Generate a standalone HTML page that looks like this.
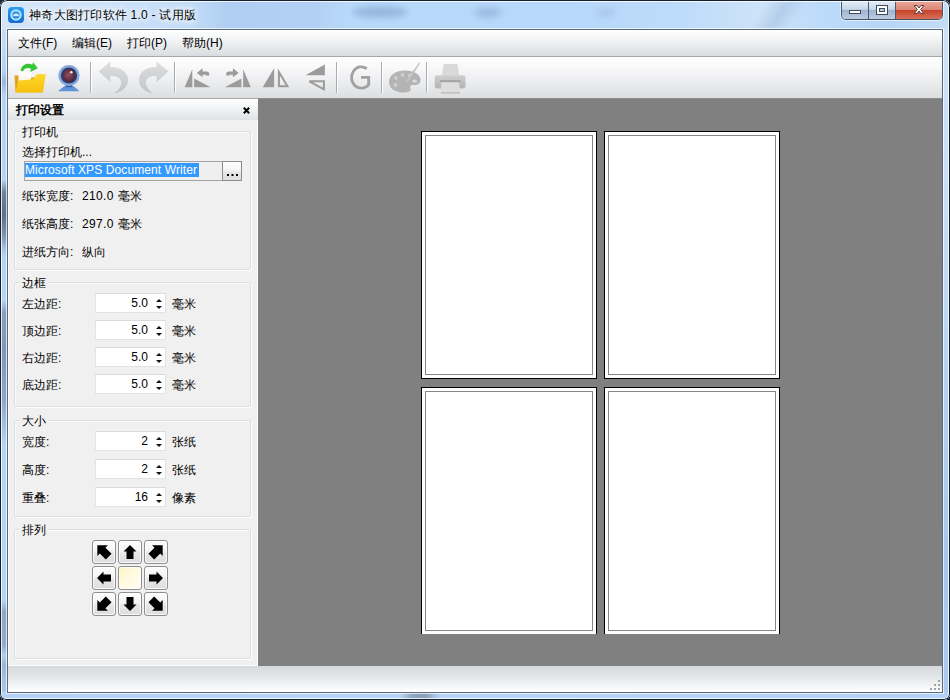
<!DOCTYPE html>
<html lang="zh">
<head>
<meta charset="utf-8">
<title>神奇大图打印软件 1.0 - 试用版</title>
<style>
*{box-sizing:border-box;margin:0;padding:0}
html,body{width:950px;height:700px;overflow:hidden;background:#1c2530}
body{font-family:"Liberation Sans",sans-serif;font-size:12px;line-height:14px;color:#000;position:relative}
.t{position:absolute;white-space:nowrap;height:14px;line-height:14px;overflow:visible}
/* window frame */
#win{position:absolute;left:0;top:0;width:950px;height:700px;border-radius:7px 7px 6px 6px;background:#b8d7f8;overflow:hidden}
#fr-title{position:absolute;left:0;top:0;width:950px;height:30px;background:linear-gradient(90deg,#d3e5f8 0,#cfe3f9 80px,#c2dcf7 190px,#afcef1 228px,#b1d0f3 313px,#b9d9fa 350px,#b7d8fb 570px,#bddbfa 680px,#cde3f8 760px,#bcdaf9 825px,#b6d6f8 885px,#c3dcf6 950px)}
#fr-left{position:absolute;left:0;top:29px;width:8px;height:671px;background:linear-gradient(180deg,#c8ddf6 0px,#b5d3f5 41px,#9fb6d4 53px,#b5d3f5 66px,#b5d3f5 151px,#6f829c 163px,#5f7189 186px,#7f93af 206px,#a9c6ea 221px,#b5d5f8 229px,#b5d5f8 271px,#8aa0c0 283px,#7f96b8 321px,#8ea7c9 371px,#a9c6e8 403px,#b5d5f8 416px,#b5d5f8 571px,#8fa6c6 583px,#93abcc 616px,#b0cef0 626px,#9db5d5 636px,#a8c6ea 661px,#b2d3f7 671px)}
#fr-right{position:absolute;left:942px;top:29px;width:8px;height:671px;background:linear-gradient(180deg,#cfe1f6 0,#c8ddf5 25%,#b4d0f0 55%,#a6c6ec 80%,#abcbf0 100%)}
#fr-bottom{position:absolute;left:0;top:692px;width:950px;height:8px;background:linear-gradient(90deg,#b2d3f7 0,#b4d5f8 400px,#93a6c0 412px,#8c9db5 425px,#b4d5f8 440px,#b2d3f7 100%)}
.blob{position:absolute;border-radius:50%;filter:blur(3px)}
#fr-edge{position:absolute;left:0;top:0;width:950px;height:700px;border-radius:7px 7px 6px 6px;box-shadow:inset 0 0 0 1px #17212e, inset 0 0 0 2px rgba(255,255,255,.8);pointer-events:none}
#fr-inner{position:absolute;left:6px;top:28px;width:938px;height:666px;border:1px solid rgba(255,255,255,.7)}
#client{position:absolute;left:7px;top:29px;width:936px;height:664px;border:1px solid #5a6a7c;background:#f0f0f0}

/* title */
#ticon{position:absolute;left:8px;top:7px;width:16px;height:16px}
#ttext{position:absolute;left:29px;top:7px;height:16px;line-height:16px;font-size:12px;letter-spacing:.25px;white-space:nowrap;color:#000;
 text-shadow:0 0 6px #fff,0 0 6px #fff,0 0 10px #fff}
#caps{position:absolute;left:841px;top:0;width:102px;height:20px;border:1px solid #46556a;border-top:1px solid #17212e;border-radius:0 0 5px 5px;overflow:hidden;
 box-shadow:0 0 0 1px rgba(255,255,255,.55)}
#caps div{position:absolute;top:0;height:18px}
#cmin{left:0;width:27px;background:linear-gradient(#e4edf7 0,#c8d7ea 46%,#9fb4cf 52%,#bccde2 100%);border-right:1px solid #4b5a6d}
#cmax{left:27px;width:27px;background:linear-gradient(#e4edf7 0,#c8d7ea 46%,#9fb4cf 52%,#bccde2 100%);border-right:1px solid #4b5a6d}
#ccls{left:54px;width:46px;background:linear-gradient(#e9a99d 0,#dc8777 48%,#c8432a 52%,#d8705a 100%)}
/* menubar */
#menubar{position:absolute;left:0;top:0;width:934px;height:26px;background:linear-gradient(#ffffff 0,#f6f7f8 30%,#e7e9eb 65%,#d9dcde 100%)}
#menuline{position:absolute;left:0;top:26px;width:934px;height:1px;background:#a5a8ab}
#menubar span{position:absolute;top:6px;height:14px;line-height:14px;white-space:nowrap}
/* toolbar */
#toolbar{position:absolute;left:0;top:27px;width:934px;height:41px;background:linear-gradient(#ffffff 0,#fafafb 20%,#ecedef 60%,#dcdee0 100%)}
#toolline{position:absolute;left:0;top:68px;width:934px;height:1px;background:linear-gradient(90deg,#a6a8aa 0,#a6a8aa 250px,#8e8f90 250px)}
.sep{position:absolute;top:5px;width:1px;height:31px;background:#a9adb2;box-shadow:1px 0 0 #fff}

/* dock */
#dock{position:absolute;left:0;top:69px;width:250px;height:567px;background:#f0f0f0;box-shadow:inset 1px 0 0 #fafcff, inset -1px 0 0 #fbfbfb, inset 0 -1px 0 #fcfcfc}
#dtitle{position:absolute;left:0;top:0;width:250px;height:21px;background:linear-gradient(#ffffff 0,#f2f3f4 45%,#dfe2e4 100%)}
#dtitle b{position:absolute;left:8px;top:4px;height:14px;line-height:14px;font-size:12px;font-weight:bold;white-space:nowrap}
.gb{position:absolute;left:6px;width:237px;border:1px solid #dedee1;border-radius:2px;box-shadow:inset 1px 1px 0 #fbfbfb, 1px 1px 0 #fdfdfd}
.gl{position:absolute;left:12px;height:14px;line-height:14px;background:#f0f0f0;padding:0 2px;white-space:nowrap}
.spin{position:absolute;left:87px;width:71px;height:20px;background:#fff;border:1px solid #e3e3e3;border-top-color:#dadada}
.spin span{position:absolute;right:17px;top:2px;height:14px;line-height:14px;text-align:right}
.spin i{position:absolute;right:3px;width:0;height:0;border-left:3px solid transparent;border-right:3px solid transparent}
.spin i.u{top:5px;border-bottom:3px solid #111}
.spin i.d{top:12px;border-top:3px solid #111}
/* canvas */
#canvas{position:absolute;left:250px;top:69px;width:684px;height:567px;background:#808080;overflow:hidden}
.pg{position:absolute;width:176px;height:248px;background:#fff;border:1px solid #000}
.pg:after{content:"";box-sizing:border-box;position:absolute;left:3px;top:3px;width:168px;height:240px;border:1px solid #868686}
/* status */
#status{position:absolute;left:0;top:636px;width:934px;height:26px;background:linear-gradient(#d6dadd 0,#e0e4e6 35%,#eef0f1 65%,#ffffff 100%)}

.ab{position:absolute;width:24px;height:24px;border:1px solid #8f8f8f;border-radius:3px;background:linear-gradient(#fdfdfd 0,#f3f3f3 45%,#e6e7e8 55%,#dcdddf 100%);box-shadow:inset 0 0 0 1px rgba(255,255,255,.8)}
.ab svg{position:absolute;left:-1px;top:-1px;width:24px;height:24px}
.ab.mid{background:linear-gradient(135deg,#fff3c4 0,#fffadf 45%,#fffef4 100%);border-color:#8e8e8e;box-shadow:inset 0 0 0 1px rgba(255,255,255,.5)}
</style>
</head>
<body>
<div id="win">
  <div id="fr-title">
    <div class="blob" style="left:352px;top:6px;width:56px;height:12px;background:#86a5cf;opacity:.65"></div>
    <div class="blob" style="left:474px;top:7px;width:28px;height:11px;background:#8eabd3;opacity:.6"></div>
    <div style="position:absolute;left:758px;top:1px;width:40px;height:28px;transform:skewX(-35deg);filter:blur(2px);background:linear-gradient(90deg,rgba(150,178,215,0),rgba(150,178,215,.42) 55%,rgba(150,178,215,0));"></div>
    <div class="blob" style="left:596px;top:8px;width:20px;height:9px;background:#9fbade;opacity:.55"></div>
  </div>
  <div id="fr-left"></div><div id="fr-right"></div><div id="fr-bottom"></div>
  <div id="fr-inner"></div>
  
  <svg id="ticon" viewBox="0 0 16 16"><defs><linearGradient id="ig" x1="0" y1="0" x2="0" y2="1"><stop offset="0" stop-color="#2f9cf0"/><stop offset="1" stop-color="#1668cf"/></linearGradient></defs>
   <rect x="0" y="0" width="16" height="16" rx="4" fill="url(#ig)"/><circle cx="8" cy="8" r="4.700" fill="#3a8fe0" stroke="#a8ecff" stroke-width="2"/><path d="M5 9.600 A3 3.200 0 0 1 11 9.600 Z" fill="#c9e9fc"/><rect x="5.200" y="9" width="5.600" height="1.600" fill="#4a7fd0" opacity=".7"/></svg>
  <div id="ttext">神奇大图打印软件 1.0 - 试用版</div>
  <div id="caps"><div id="cmin"></div><div id="cmax"></div><div id="ccls"></div>
   <svg style="position:absolute;left:-1px;top:-1px" width="100" height="19" viewBox="0 0 100 19">
    <rect x="8.500" y="10.500" width="11" height="3" fill="#fff" stroke="#3d4a5c"/>
    <rect x="35.500" y="5.500" width="11" height="9" fill="#fff" stroke="#3d4a5c"/><rect x="38.500" y="8.500" width="5" height="3" fill="#b9c8dc" stroke="#3d4a5c"/>
    <path d="M73.200 5.500 L76 5.500 L78 8 L80 5.500 L82.800 5.500 L79.700 9.500 L82.800 13.500 L80 13.500 L78 11 L76 13.500 L73.200 13.500 L76.300 9.500 Z" fill="#fff" stroke="#5a3a3a" stroke-width="1" stroke-linejoin="round"/>
   </svg>
  </div>
  <div id="client">
   <div id="menubar"><span style="left:10px">文件(F)</span><span style="left:64px">编辑(E)</span><span style="left:119px">打印(P)</span><span style="left:174px">帮助(H)</span></div>
   <div id="menuline"></div>
   <div id="toolbar">
     <div class="sep" style="left:82px"></div><div class="sep" style="left:166px"></div><div class="sep" style="left:328px"></div><div class="sep" style="left:373px"></div><div class="sep" style="left:418px"></div>
     <svg style="position:absolute;left:0;top:0" width="934" height="41" viewBox="8 57 934 41">
      <defs>
       <linearGradient id="fy" x1="0" y1="0" x2="0" y2="1"><stop offset="0" stop-color="#ffd92e"/><stop offset="1" stop-color="#f6c00c"/></linearGradient>
       <radialGradient id="lens" cx=".45" cy=".45" r=".6"><stop offset="0" stop-color="#93505f"/><stop offset="1" stop-color="#4a2038"/></radialGradient>
       <linearGradient id="gr" x1="0" y1="0" x2="0" y2="1"><stop offset="0" stop-color="#dedfe0"/><stop offset="1" stop-color="#c2c4c7"/></linearGradient>
       <linearGradient id="pr" x1="0" y1="0" x2="0" y2="1"><stop offset="0" stop-color="#cfcfcf"/><stop offset="1" stop-color="#b3b3b3"/></linearGradient>
      </defs>
      <!-- open folder -->
      <path d="M14.5 75.5 L25.5 75.5 L27.5 77.500 L41 77.500 L41 92.300 L15.500 92.300 Z" fill="#e3a321"/>
      <path d="M18.800 70.800 L31.500 72 L30.500 83 L18.300 82 Z" fill="#fff" opacity=".92"/>
      <path d="M15.500 92.400 L18.400 80.600 L33.200 79.200 L37 73.900 L45.800 74.200 L42.900 92.400 Z" fill="url(#fy)"/>
      <path d="M20.600 70.800 C21.500 64.600 27.500 62.300 32.300 64.700 L33 62.300 L37.800 68.300 L30.300 72 L31 68.700 C27.700 67.300 24.200 68.200 23 71.300 Z" fill="#33c733"/>
      <!-- webcam -->
      <path d="M58.200 91.200 Q63.500 86.200 66.500 85.500 L71.500 85.500 Q74.500 86.200 79.300 91.200 Z" fill="#5f93da"/>
      <rect x="65.800" y="83" width="6.400" height="4.200" fill="#3f5f9a"/>
      <circle cx="69" cy="75.500" r="10.600" fill="#86a8dc"/>
      <circle cx="69" cy="75.500" r="8.100" fill="#2c3a6c"/>
      <circle cx="69" cy="75.500" r="6.300" fill="url(#lens)"/>
      <circle cx="71.300" cy="72.300" r="1.300" fill="#fff" opacity=".9"/>
      <!-- undo / redo -->
      <path d="M98.500 71.500 L110.500 61.500 L110.500 67 C122 67 128.500 73 128 81 C127.500 88 121 92.500 113.500 93.500 C119 90 121.500 86 121 82 C120.500 77.500 116 75.500 110.500 76 L110.500 82 Z" fill="url(#gr)"/>
      <path transform="translate(267 0) scale(-1 1)" d="M98.500 71.500 L110.500 61.500 L110.500 67 C122 67 128.500 73 128 81 C127.500 88 121 92.500 113.500 93.500 C119 90 121.500 86 121 82 C120.500 77.500 116 75.500 110.500 76 L110.500 82 Z" fill="url(#gr)"/>
      <!-- rotate left -->
      <g fill="#9b9b9b">
       <path d="M184.700 87.300 L192.300 69.300 L192.300 87.300 Z"/>
       <path d="M194.100 78.400 L210.600 87.300 L194.100 87.300 Z"/>
       <path d="M196.800 73 L202.600 68.300 L202.600 71.400 L207 71.400 Q209.300 71.600 209.300 74 L209.300 75.600 L205.800 75.600 L205.800 74.800 L202.600 74.800 L202.600 77.300 Z"/>
      </g>
      <g fill="#9b9b9b" transform="translate(435.500 0) scale(-1 1)">
       <path d="M184.700 87.300 L192.300 69.300 L192.300 87.300 Z"/>
       <path d="M194.100 78.400 L210.600 87.300 L194.100 87.300 Z"/>
       <path d="M196.800 73 L202.600 68.300 L202.600 71.400 L207 71.400 Q209.300 71.600 209.300 74 L209.300 75.600 L205.800 75.600 L205.800 74.800 L202.600 74.800 L202.600 77.300 Z"/>
      </g>
      <!-- flip h -->
      <path d="M262.700 87.300 L274.100 68.300 L274.100 87.300 Z" fill="#9b9b9b"/>
      <path d="M278.900 72 L278.900 86.300 L287.500 86.300 Z" fill="none" stroke="#9b9b9b" stroke-width="2"/>
      <!-- flip v -->
      <path d="M305.400 75.200 L324.900 64.500 L324.900 75.200 Z" fill="#9b9b9b"/>
      <path d="M309.300 81.300 L323.900 81.300 L323.900 89.300 Z" fill="none" stroke="#9b9b9b" stroke-width="2"/>
      <!-- G -->
      <path d="M366.800 68.600 A9.800 10.700 0 1 0 368.700 84.600 L368.700 77.400 L361 77.400" fill="none" stroke="#a1a1a1" stroke-width="2.800"/>
      <!-- palette -->
      <path d="M389 82 C389 75 396 70.500 405 70.500 C414 70.500 420.500 74.500 420.500 80 C420.500 84.500 416.500 85.500 413 85 C410.500 84.700 409.500 86.500 410.500 88.500 C411.500 91 408.500 92.600 403.500 92.600 C395.500 92.600 389 88.500 389 82 Z" fill="#b4b4b4"/>
      <circle cx="396" cy="78" r="1.900" fill="#cfcfcf"/><circle cx="402.500" cy="75" r="1.900" fill="#cfcfcf"/><circle cx="410" cy="75.300" r="1.900" fill="#cfcfcf"/><circle cx="395.500" cy="85" r="1.900" fill="#cfcfcf"/><ellipse cx="414.500" cy="81" rx="2.400" ry="1.600" fill="#dcdcdc"/>
      <path d="M405.500 81.500 L408 78 L419.300 62.300 L420.300 63 L409.800 79.200 L407.300 82.600 Z" fill="#c4c4c4"/>
      <!-- printer -->
      <path d="M442 75.500 L443.500 64 L457.500 64 L459.200 75.500 Z" fill="#d9d9d9"/>
      <rect x="434.700" y="75.200" width="30.800" height="13.400" rx="3" fill="url(#pr)"/>
      <rect x="440" y="80.200" width="20.500" height="2" fill="#a2a2a2"/>
      <path d="M441.500 82.200 L459 82.200 L460 93 L440.500 93 Z" fill="#dedede"/>
      <rect x="441" y="92.300" width="19" height="1.200" fill="#b5b5b5"/>
     </svg>
   </div>
   <div id="toolline"></div>
   
   <div id="dock">
     <div id="dtitle"><b>打印设置</b>
       <svg style="position:absolute;left:235px;top:8px" width="7" height="7" viewBox="0 0 7 7"><path d="M0.800 0.800 L6.200 6.200 M6.200 0.800 L0.800 6.200" stroke="#000" stroke-width="2"/></svg>
     </div>
     <!-- printer group -->
     <div class="gb" style="top:32px;height:139px"></div>
     <div class="gl" style="top:26px">打印机</div>
     <div class="t" style="left:14px;top:46px">选择打印机...</div>
     <div style="position:absolute;left:16px;top:62px;width:199px;height:20px;background:#efefef;border:1px solid #a3a3a3"></div>
     <div class="t" style="left:17px;top:64px;width:174px;height:14px;line-height:14px;background:#3399ff;color:#fff;letter-spacing:0.1px">Microsoft XPS Document Writer</div>
     <div style="position:absolute;left:214px;top:62px;width:20px;height:20px;border:1px solid #8c8c8c;background:linear-gradient(#ffffff 0,#f4f4f4 45%,#e6e6e6 55%,#dfdfdf 100%)"></div>
     <svg style="position:absolute;left:219px;top:75px" width="11" height="2" viewBox="0 0 11 2"><rect x="0" y="0" width="2" height="2"/><rect x="4.500" y="0" width="2" height="2"/><rect x="9" y="0" width="2" height="2"/></svg>
     <div class="t" style="left:14px;top:90px">纸张宽度:</div><div class="t" style="left:74px;top:90px;letter-spacing:.35px">210.0</div><div class="t" style="left:110px;top:90px">毫米</div>
     <div class="t" style="left:14px;top:118px">纸张高度:</div><div class="t" style="left:74px;top:118px;letter-spacing:.35px">297.0</div><div class="t" style="left:110px;top:118px">毫米</div>
     <div class="t" style="left:14px;top:146px">进纸方向:</div><div class="t" style="left:74px;top:146px">纵向</div>
     <!-- border group -->
     <div class="gb" style="top:183px;height:125px"></div>
     <div class="gl" style="top:177px">边框</div>
     <div class="t" style="left:14px;top:198px">左边距:</div><div class="spin" style="top:194px"><span>5.0</span><i class="u"></i><i class="d"></i></div><div class="t" style="left:164px;top:198px">毫米</div>
     <div class="t" style="left:14px;top:225px">顶边距:</div><div class="spin" style="top:221px"><span>5.0</span><i class="u"></i><i class="d"></i></div><div class="t" style="left:164px;top:225px">毫米</div>
     <div class="t" style="left:14px;top:252px">右边距:</div><div class="spin" style="top:248px"><span>5.0</span><i class="u"></i><i class="d"></i></div><div class="t" style="left:164px;top:252px">毫米</div>
     <div class="t" style="left:14px;top:279px">底边距:</div><div class="spin" style="top:275px"><span>5.0</span><i class="u"></i><i class="d"></i></div><div class="t" style="left:164px;top:279px">毫米</div>
     <!-- size group -->
     <div class="gb" style="top:321px;height:97px"></div>
     <div class="gl" style="top:315px">大小</div>
     <div class="t" style="left:14px;top:336px">宽度:</div><div class="spin" style="top:332px"><span>2</span><i class="u"></i><i class="d"></i></div><div class="t" style="left:164px;top:336px">张纸</div>
     <div class="t" style="left:14px;top:364px">高度:</div><div class="spin" style="top:360px"><span>2</span><i class="u"></i><i class="d"></i></div><div class="t" style="left:164px;top:364px">张纸</div>
     <div class="t" style="left:14px;top:392px">重叠:</div><div class="spin" style="top:388px"><span>16</span><i class="u"></i><i class="d"></i></div><div class="t" style="left:164px;top:392px">像素</div>
     <!-- arrange group -->
     <div class="gb" style="top:430px;height:130px"></div>
     <div class="gl" style="top:424px">排列</div>
     <div class="ab" style="left:84px;top:441px"><svg viewBox="0 0 24 24"><path transform="rotate(-45 12 12) translate(12 10.6) scale(1.15) translate(-12 -12)" d="M12 5 L18.500 11.500 L15.500 11.500 L15.500 19 L8.500 19 L8.500 11.500 L5.500 11.500 Z" fill="#000"/></svg></div><div class="ab" style="left:110px;top:441px"><svg viewBox="0 0 24 24"><path transform="rotate(0 12 12) translate(12 12) scale(1.0) translate(-12 -12)" d="M12 5 L18.500 11.500 L15.500 11.500 L15.500 19 L8.500 19 L8.500 11.500 L5.500 11.500 Z" fill="#000"/></svg></div><div class="ab" style="left:136px;top:441px"><svg viewBox="0 0 24 24"><path transform="rotate(45 12 12) translate(12 10.6) scale(1.15) translate(-12 -12)" d="M12 5 L18.500 11.500 L15.500 11.500 L15.500 19 L8.500 19 L8.500 11.500 L5.500 11.500 Z" fill="#000"/></svg></div>
     <div class="ab" style="left:84px;top:467px"><svg viewBox="0 0 24 24"><path transform="rotate(-90 12 12) translate(12 12) scale(1.0) translate(-12 -12)" d="M12 5 L18.500 11.500 L15.500 11.500 L15.500 19 L8.500 19 L8.500 11.500 L5.500 11.500 Z" fill="#000"/></svg></div><div class="ab mid" style="left:110px;top:467px"></div><div class="ab" style="left:136px;top:467px"><svg viewBox="0 0 24 24"><path transform="rotate(90 12 12) translate(12 12) scale(1.0) translate(-12 -12)" d="M12 5 L18.500 11.500 L15.500 11.500 L15.500 19 L8.500 19 L8.500 11.500 L5.500 11.500 Z" fill="#000"/></svg></div>
     <div class="ab" style="left:84px;top:493px"><svg viewBox="0 0 24 24"><path transform="rotate(-135 12 12) translate(12 10.6) scale(1.15) translate(-12 -12)" d="M12 5 L18.500 11.500 L15.500 11.500 L15.500 19 L8.500 19 L8.500 11.500 L5.500 11.500 Z" fill="#000"/></svg></div><div class="ab" style="left:110px;top:493px"><svg viewBox="0 0 24 24"><path transform="rotate(180 12 12) translate(12 12) scale(1.0) translate(-12 -12)" d="M12 5 L18.500 11.500 L15.500 11.500 L15.500 19 L8.500 19 L8.500 11.500 L5.500 11.500 Z" fill="#000"/></svg></div><div class="ab" style="left:136px;top:493px"><svg viewBox="0 0 24 24"><path transform="rotate(135 12 12) translate(12 10.6) scale(1.15) translate(-12 -12)" d="M12 5 L18.500 11.500 L15.500 11.500 L15.500 19 L8.500 19 L8.500 11.500 L5.500 11.500 Z" fill="#000"/></svg></div>
   </div>
   <div id="canvas">
     <div class="pg" style="left:163px;top:32px"></div>
     <div class="pg" style="left:346px;top:32px"></div>
     <div class="pg" style="left:163px;top:288px;border-bottom:none;height:247px"></div>
     <div class="pg" style="left:346px;top:288px;border-bottom:none;height:247px"></div>
   </div>
   <div id="status">
     <svg style="position:absolute;left:922px;top:14px" width="11" height="11" viewBox="0 0 11 11" fill="#9fa2a6"><rect x="8" y="0" width="2" height="2"/><rect x="4" y="4" width="2" height="2"/><rect x="8" y="4" width="2" height="2"/><rect x="0" y="8" width="2" height="2"/><rect x="4" y="8" width="2" height="2"/><rect x="8" y="8" width="2" height="2"/></svg>
   </div>

  </div>
  <div id="fr-edge"></div>
</div>
</body>
</html>
